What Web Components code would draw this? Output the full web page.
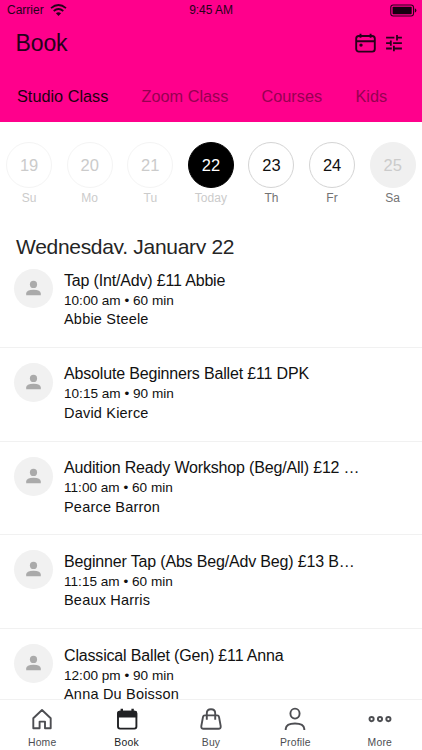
<!DOCTYPE html>
<html lang="en">
<head>
<meta charset="utf-8">
<title>Book</title>
<style>
html,body{margin:0;height:100%;overflow:hidden;background:#fff}
body{font-family:"Liberation Sans",Arial,sans-serif;color:#111}
</style>
</head>
<body>
<booking-app></booking-app>
<script>
const define = (name, render) => customElements.define(name, class extends HTMLElement {
  connectedCallback() {
    if (this.shadowRoot) return;
    this.attachShadow({ mode: "open" }).innerHTML = render(this);
  }
});

define("status-bar", () => `
<style>
:host{display:grid;grid-template-columns:1fr auto 1fr;align-items:center;height:20px;padding:0 5px 0 7px;font-size:12px;color:#26001a;box-sizing:border-box;line-height:19px}
.left{display:flex;align-items:center;gap:6px}
.time{letter-spacing:-.05px;padding-right:2px}
.battery{justify-self:end}
svg{display:block}
</style>
<div class="left"><span>Carrier</span>
<svg width="17" height="12" viewBox="0 0 17 12" fill="none" stroke="#26001a" stroke-width="1.8"><path d="M1 4.1Q8.5-2 16 4.1M3.7 7Q8.5 3 13.3 7"/><path d="M5.9 9.2Q8.5 7.2 11.1 9.2L8.5 11.9Z" fill="#26001a" stroke="none"/></svg></div>
<div class="time">9:45 AM</div>
<svg class="battery" width="27" height="13" viewBox="0 0 28 13"><rect x=".8" y=".7" width="23.6" height="11.6" rx="2.6" fill="none" stroke="#26001a" stroke-width="1.1"/><rect x="2.7" y="2.6" width="19.8" height="7.8" rx=".8" fill="#160010"/><path d="M25.7 4.2Q27.4 4.8 27.4 6.5Q27.4 8.2 25.7 8.8Z" fill="#26001a"/></svg>`);

define("app-header", () => `
<style>
:host{display:block;height:122px;background:#ff008c;box-sizing:border-box}
.bar{display:flex;height:46px;padding:0 19px 0 15.5px;align-items:center;box-sizing:border-box}
h1{font-weight:400;font-size:23px;letter-spacing:-.1px;margin:0;flex:1;color:#26001a;line-height:26px}
svg{display:block}
.cal{margin-right:8px}
nav{display:flex;align-items:center;height:60px;padding-left:17px;box-sizing:border-box}
</style>
<status-bar></status-bar>
<div class="bar"><h1>Book</h1>
<svg class="cal" width="22" height="20" viewBox="0 0 22 20" fill="none" stroke="#26001a" stroke-width="1.9"><rect x="1.2" y="3" width="18.6" height="15.6" rx="2.6"/><path d="M1.2 8.3H19.8M5.5 .7V4.8M15.6 .7V4.8"/><circle cx="6" cy="12.1" r="1.7" fill="#26001a" stroke="none"/></svg>
<svg width="18" height="18" viewBox="0 0 18 18" fill="none" stroke="#26001a" stroke-width="1.8"><path d="M1.1 3.7H9.4M12 3.7H16.9M12 1V6.4M1.1 9.1H5.8M8.1 9.1H16.9M5.8 6.4V11.8M1.1 14.5H6.8M8.9 14.5H16.9M8.9 11.8V17.2"/></svg></div>
<nav><slot></slot></nav>`);

define("class-tab", el => `
<style>:host{display:block;font-size:16.3px;line-height:20px;color:#960052;width:${el.getAttribute("span")}px;white-space:nowrap}
:host([selected]){color:#1c0011}</style><slot></slot>`);

define("day-chip", el => `
<style>
:host{display:flex;flex-direction:column;align-items:center;width:60.6px;flex:none;color:#cbcbcb}
.disc{width:46px;height:46px;box-sizing:border-box;border:1px solid #f4f4f4;border-radius:50%;display:flex;align-items:center;justify-content:center;font-size:16.5px;line-height:18px}
.name{font-size:12px;line-height:14px;margin-top:3px;letter-spacing:.1px}
:host([kind=today]) .disc{background:#000;border-color:#000;color:#fff}
:host([kind=open]) .disc{border-color:#d4d4d4;color:#111}
:host([kind=closed]) .disc{background:#f0f0f0;border-color:#f0f0f0}
:host([kind=open]) .name,:host([kind=closed]) .name{color:#737373}
</style>
<div class="disc">${el.getAttribute("date")}</div><div class="name"><slot></slot></div>`);

define("day-strip", () => `
<style>:host{display:flex;padding:20px 0 0;margin-left:-1.2px;height:103px;box-sizing:border-box}</style><slot></slot>`);

define("date-heading", () => `
<style>:host{display:block;overflow:hidden;height:29px;padding:0 16px;font-size:21px;letter-spacing:-.3px;line-height:24px;box-sizing:border-box;color:#252525}
div{padding-top:9.5px;white-space:nowrap}</style><div><slot></slot></div>`);

define("class-row", el => `
<style>
:host{display:flex;height:93.75px;padding:15px 0 0 13.5px;box-sizing:border-box;border-bottom:1px solid #f1f1f1;color:#111}
.avatar{width:39px;height:39px;border-radius:50%;background:#f1f1f1;flex:none;margin-right:11.5px}
.avatar svg{display:block}
.text{white-space:nowrap}
.title{font-size:16px;line-height:20px;margin-top:1.5px;letter-spacing:-.17px}
.time{font-size:13.6px;line-height:18px;margin-top:1px}
.who{font-size:14.5px;line-height:18px;margin-top:.5px;letter-spacing:.2px}
</style>
<div class="avatar"><svg width="39" height="39" viewBox="0 0 39 39" fill="#aaa"><circle cx="19.5" cy="15.4" r="3.6"/><path d="M12.2 26.3V24.6Q12.2 20.8 19.5 20.8Q26.8 20.8 26.8 24.6V26.3Z"/></svg></div>
<div class="text"><div class="title"><slot></slot></div><div class="time">${el.getAttribute("time")}</div><div class="who">${el.getAttribute("teacher")}</div></div>`);

const icons = {
  home: `<path d="M2.3 10.3L11 2L19.7 10.3V20.2H14V13.6H8.6V20.2H2.3Z" stroke-linejoin="round"/>`,
  book: `<rect x="2" y="3.6" width="18.4" height="17" rx="2"/><path d="M1.3 9.5V5Q1.3 2.8 3.5 2.8H4.6V.8H7V2.8H15.4V.8H17.8V2.8H19Q21.1 2.8 21.1 5V9.5Z" fill="currentColor" stroke="none"/>`,
  buy: `<path d="M4.8 7.4H17.2Q18.7 7.4 19 8.9L20.7 18.2Q21 20.8 18.5 20.8H3.5Q1 20.8 1.3 18.2L3 8.9Q3.3 7.4 4.8 7.4Z"/><path d="M6.8 11.8V5.2Q6.8 1.2 11 1.2Q15.2 1.2 15.2 5.2V11.8"/>`,
  profile: `<ellipse cx="11" cy="5.6" rx="4.6" ry="5"/><path d="M1.7 22.1V20.8Q2.2 15.5 11 15.5Q19.8 15.5 20.3 20.8V22.1"/>`,
  more: `<circle cx="2.6" cy="11.1" r="2.1"/><circle cx="11" cy="11.1" r="2.1"/><circle cx="19.4" cy="11.1" r="2.1"/>`
};
define("nav-item", el => `
<style>
:host{display:flex;flex-direction:column;align-items:center;flex:1;color:#4d4e52;font-size:10.4px;line-height:12px;letter-spacing:.2px;padding-top:8px}
:host([selected]){color:#202124}
svg{display:block;overflow:visible;margin-bottom:7px}
</style>
<svg width="22" height="22" viewBox="0 0 22 22" fill="none" stroke="currentColor" stroke-width="1.9">${icons[el.getAttribute("icon")]}</svg><slot></slot>`);

define("bottom-nav", () => `
<style>:host{display:flex;height:51px;flex:none;background:#fff;border-top:1px solid #f1f1f1;box-sizing:border-box}</style><slot></slot>`);

define("booking-app", () => `
<style>
:host{display:flex;flex-direction:column;width:422px;height:750px;overflow:hidden}
app-header,day-strip,date-heading{flex:none}
main{flex:1;min-height:0;overflow:hidden}
</style>
<app-header><class-tab selected span="124.5">Studio Class</class-tab><class-tab span="120">Zoom Class</class-tab><class-tab span="94">Courses</class-tab><class-tab span="50">Kids</class-tab></app-header>
<day-strip><day-chip date="19">Su</day-chip><day-chip date="20">Mo</day-chip><day-chip date="21">Tu</day-chip><day-chip date="22" kind="today">Today</day-chip><day-chip date="23" kind="open">Th</day-chip><day-chip date="24" kind="open">Fr</day-chip><day-chip date="25" kind="closed">Sa</day-chip></day-strip>
<date-heading>Wednesday, January 22</date-heading>
<main>
<class-row time="10:00 am • 60 min" teacher="Abbie Steele">Tap (Int/Adv) £11 Abbie</class-row>
<class-row time="10:15 am • 90 min" teacher="David Kierce">Absolute Beginners Ballet £11 DPK</class-row>
<class-row time="11:00 am • 60 min" teacher="Pearce Barron">Audition Ready Workshop (Beg/All) £12 …</class-row>
<class-row time="11:15 am • 60 min" teacher="Beaux Harris">Beginner Tap (Abs Beg/Adv Beg) £13 B…</class-row>
<class-row time="12:00 pm • 90 min" teacher="Anna Du Boisson">Classical Ballet (Gen) £11 Anna</class-row>
</main>
<bottom-nav><nav-item icon="home">Home</nav-item><nav-item icon="book" selected>Book</nav-item><nav-item icon="buy">Buy</nav-item><nav-item icon="profile">Profile</nav-item><nav-item icon="more">More</nav-item></bottom-nav>`);
</script>
</body>
</html>
